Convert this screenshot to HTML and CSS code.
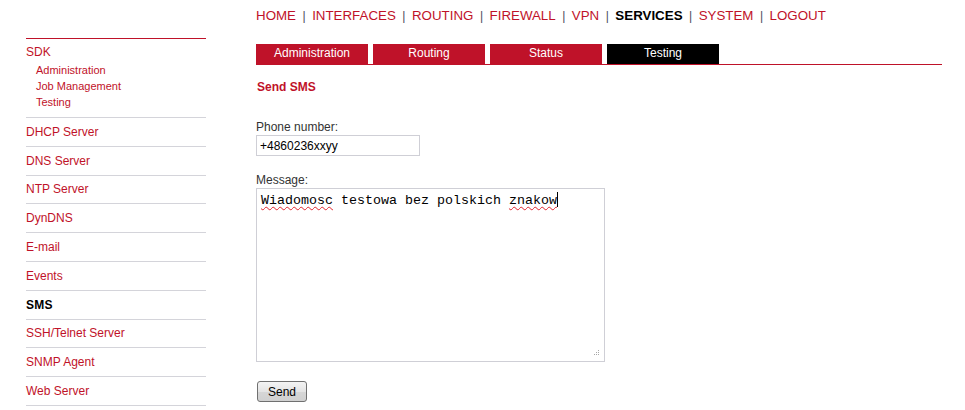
FILE: index.html
```html
<!DOCTYPE html>
<html lang="en">
<head>
  <meta charset="UTF-8">
  <title>Services - SMS</title>
  <link rel="stylesheet" href="styles.css">
</head>
<body>
  <div class="page">
    <aside class="sidebar">
      <div class="side-group">
        <a class="side-title" href="#">SDK</a>
        <ul class="side-sub">
          <li><a href="#">Administration</a></li>
          <li><a href="#">Job Management</a></li>
          <li><a href="#">Testing</a></li>
        </ul>
      </div>
      <ul class="side-menu">
        <li><a href="#">DHCP Server</a></li>
        <li><a href="#">DNS Server</a></li>
        <li><a href="#">NTP Server</a></li>
        <li><a href="#">DynDNS</a></li>
        <li><a href="#">E-mail</a></li>
        <li><a href="#">Events</a></li>
        <li class="active"><a href="#">SMS</a></li>
        <li><a href="#">SSH/Telnet Server</a></li>
        <li><a href="#">SNMP Agent</a></li>
        <li><a href="#">Web Server</a></li>
      </ul>
    </aside>

    <main class="content">
      <ul class="topnav">
        <li><a href="#">HOME</a></li>
        <li><a href="#">INTERFACES</a></li>
        <li><a href="#">ROUTING</a></li>
        <li><a href="#">FIREWALL</a></li>
        <li><a href="#">VPN</a></li>
        <li class="active"><a href="#">SERVICES</a></li>
        <li><a href="#">SYSTEM</a></li>
        <li><a href="#">LOGOUT</a></li>
      </ul>

      <div class="tabs">
        <a class="tab" href="#">Administration</a>
        <a class="tab" href="#">Routing</a>
        <a class="tab" href="#">Status</a>
        <a class="tab active" href="#">Testing</a>
      </div>

      <h2 class="section-title">Send SMS</h2>

      <form class="sms-form">
        <label class="field-label" for="phone">Phone number:</label>
        <input class="text-input" type="text" id="phone" value="+4860236xxyy">

        <label class="field-label message-label">Message:</label>
        <div class="message-box" role="textbox" aria-multiline="true">
          <span class="misspelled">Wiadomosc</span> testowa bez polskich <span class="misspelled">znakow</span><span class="caret"></span>
          <svg class="grip" width="7" height="7" viewBox="0 0 7 7">
            <rect x="5" y="0" width="1" height="1" fill="#a8a8a8"/>
            <rect x="3" y="2" width="1" height="1" fill="#a8a8a8"/>
            <rect x="5" y="2" width="1" height="1" fill="#a8a8a8"/>
            <rect x="1" y="4" width="1" height="1" fill="#a8a8a8"/>
            <rect x="3" y="4" width="1" height="1" fill="#a8a8a8"/>
            <rect x="5" y="4" width="1" height="1" fill="#a8a8a8"/>
          </svg>
        </div>

        <button class="send-btn" type="button">Send</button>
      </form>
    </main>
  </div>
</body>
</html>
```

FILE: styles.css
```css
body {
  margin: 0;
  font-family: "Liberation Sans", Arial, sans-serif;
  background: #fff;
  color: #333;
}

a {
  text-decoration: none;
  color: #bf1229;
}

ul {
  list-style: none;
  margin: 0;
  padding: 0;
}

.page {
  display: flex;
  gap: 50px;
  padding-left: 26px;
}

/* left menu */
.sidebar {
  width: 180px;
  padding-top: 38px;
  font-size: 12px;
}

.side-group {
  border-top: 1px solid #bf1229;
  border-bottom: 1px solid #d4d4da;
  padding: 6px 0 7px;
}

.side-title {
  display: block;
  line-height: 14px;
}

.side-sub {
  padding-left: 10px;
  margin-top: 3px;
  font-size: 11px;
}

.side-sub li {
  line-height: 16px;
}

.side-menu li {
  height: 27.8px;
  border-bottom: 1px solid #d4d4da;
  display: flex;
  align-items: center;
}

.side-menu li.active a {
  color: #000;
  font-weight: bold;
  letter-spacing: 0.3px;
}

/* main column */
.content {
  width: 686px;
}

.topnav {
  display: flex;
  margin-top: 8px;
  font-size: 13.33px;
  line-height: 16px;
}

.topnav li + li::before {
  content: "|";
  color: #4a4a5c;
  margin: 0 6.5px;
  font-size: 12px;
}

.topnav li.active a {
  color: #000;
  font-weight: bold;
}

.tabs {
  display: flex;
  gap: 5px;
  margin-top: 20px;
  border-bottom: 1px solid #bf1229;
}

.tab {
  width: 112px;
  height: 20px;
  line-height: 18px;
  text-align: center;
  background: #bf1229;
  color: #fff;
  font-size: 12px;
}

.tab.active {
  background: #000;
}

.section-title {
  margin: 15px 0 0 1px;
  font-size: 12px;
  line-height: 14px;
  color: #bf1229;
}

.sms-form {
  display: flex;
  flex-direction: column;
  align-items: flex-start;
  margin-top: 26px;
}

.field-label {
  font-size: 12px;
  line-height: 14px;
  color: #333;
}

.text-input {
  margin: 1px 0 0;
  width: 164px;
  height: 21px;
  box-sizing: border-box;
  border: 1px solid #cfcfd6;
  padding: 0 3px;
  font-family: "Liberation Sans", Arial, sans-serif;
  font-size: 12px;
  color: #000;
}

.message-label {
  margin-top: 17px;
}

.message-box {
  position: relative;
  margin-top: 1px;
  width: 349px;
  height: 174px;
  box-sizing: border-box;
  border: 1px solid #cfcfd6;
  padding: 3px 4px;
  font-family: "Liberation Mono", "Courier New", monospace;
  font-size: 13.33px;
  line-height: 16px;
  color: #000;
}

.misspelled {
  text-decoration: underline wavy #e0242c;
  text-decoration-thickness: 1px;
  text-underline-offset: 2px;
}

.caret {
  display: inline-block;
  width: 1px;
  height: 15px;
  background: #000;
  vertical-align: -3px;
}

.grip {
  position: absolute;
  right: 4px;
  bottom: 4px;
}

.send-btn {
  margin: 19px 0 0 1px;
  width: 50px;
  height: 21px;
  padding: 0;
  border: 1px solid #707070;
  border-radius: 3px;
  background: linear-gradient(#f4f4f4, #e4e4e4 50%, #d6d6d6 51%, #d0d0d0);
  font-family: "Liberation Sans", Arial, sans-serif;
  font-size: 12px;
  color: #000;
}
```
